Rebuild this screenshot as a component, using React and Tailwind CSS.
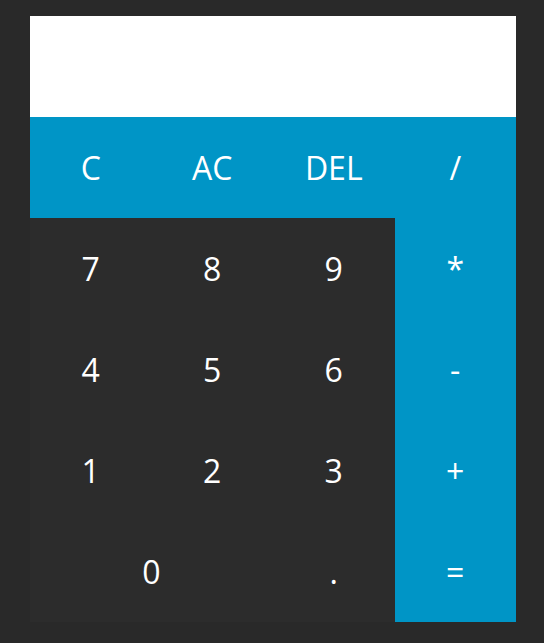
export default function App() {
  const dark = "flex items-center justify-center bg-[#2c2c2c] text-white";
  const blue = "flex items-center justify-center bg-[#0095c6] text-white";
  return (
    <div className="min-h-[643px] w-[544px] bg-[#292929] pt-[16px] pl-[30px]">
      <div className="w-[486px] font-['Open_Sans',sans-serif] text-[32px]">
        <div className="h-[101px] bg-white"></div>
        <div className="grid grid-cols-4 auto-rows-[101px]">
          <div className={blue}>C</div>
          <div className={blue}>AC</div>
          <div className={blue}>DEL</div>
          <div className={blue}>/</div>
          <div className={dark}>7</div>
          <div className={dark}>8</div>
          <div className={dark}>9</div>
          <div className={blue}>*</div>
          <div className={dark}>4</div>
          <div className={dark}>5</div>
          <div className={dark}>6</div>
          <div className={blue}>-</div>
          <div className={dark}>1</div>
          <div className={dark}>2</div>
          <div className={dark}>3</div>
          <div className={blue}>+</div>
          <div className={`${dark} col-span-2`}>0</div>
          <div className={dark}>.</div>
          <div className={blue}>=</div>
        </div>
      </div>
    </div>
  );
}
